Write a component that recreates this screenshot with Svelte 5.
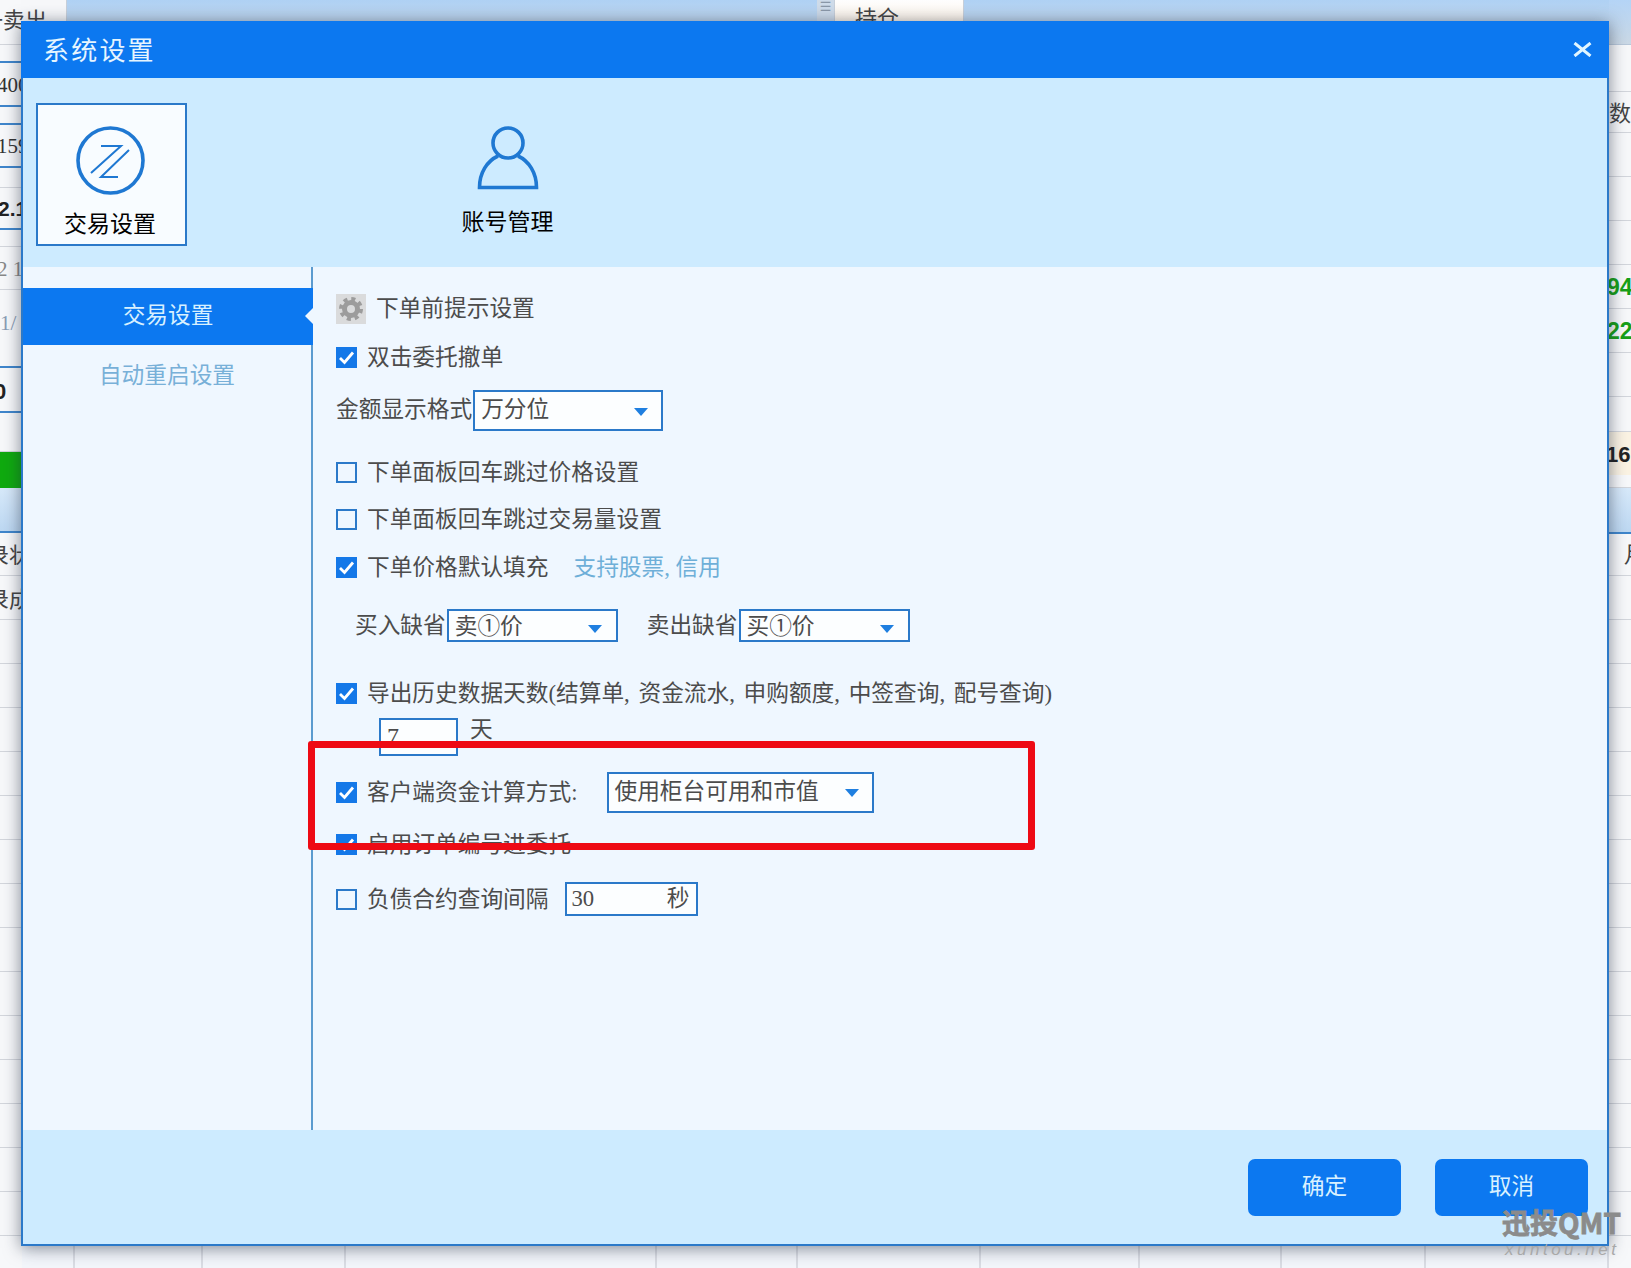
<script lang="ts">
  // backdrop rows: h = height including the bottom rule, rule colour, optional text
  type BgRow = { h: number; kind?: string; text?: string; cls?: string }

  const grid = (n: number): BgRow[] => Array.from({ length: n }, () => ({ h: 44 }))

  const leftRows: BgRow[] = [
    { h: 45, text: '一卖出', cls: 'zh top' },
    { h: 18, kind: 'blue' },
    { h: 44, kind: 'blue', text: '400', cls: 'num' },
    { h: 18, kind: 'blue' },
    { h: 43, kind: 'blue', text: '159', cls: 'num' },
    { h: 20 },
    { h: 42, kind: 'blue', text: '2.1', cls: 'bold' },
    { h: 17 },
    { h: 43, text: '2 1', cls: 'num grey' },
    { h: 78, kind: 'blue', text: '1/', cls: 'num pale' },
    { h: 45, kind: 'blue', text: '0', cls: 'bold zero' },
    { h: 39 },
    { h: 36, kind: 'green' },
    { h: 45, kind: 'band' },
    { h: 43, text: '录状', cls: 'zh tail' },
    { h: 44, text: '录成', cls: 'zh tail' },
    ...grid(15)
  ]

  const rightRows: BgRow[] = [
    { h: 45, kind: 'head' },
    { h: 47, text: '' },
    { h: 41, text: '数', cls: 'zh up' },
    { h: 44 },
    { h: 44 },
    { h: 44 },
    { h: 44, text: '94', cls: 'bold green-text' },
    { h: 44, text: '22', cls: 'bold green-text' },
    { h: 44 },
    { h: 35 },
    { h: 43, kind: 'cream', text: '16', cls: 'bold sixteen' },
    { h: 13 },
    { h: 46, kind: 'band' },
    { h: 42, text: '月', cls: 'zh moon' },
    ...grid(16)
  ]

  const bottomCols = [53, 128, 143, 311, 141, 183, 159, 142, 144, 183]
</script>

<div class="screen">
  <div class="backdrop">
    <div class="strip left">
      {#each leftRows as row}
        <div class="bg-row {row.kind ?? ''}" style="height: {row.h}px">
          {#if row.text}<span class={row.cls}>{row.text}</span>{/if}
        </div>
      {/each}
    </div>

    <div class="middle">
      <div class="tabbar">
        <div class="first-cell"></div>
        <div class="tab-band lead"></div>
        <div class="handle">☰</div>
        <div class="pos-tab">持仓</div>
        <div class="tab-band"></div>
      </div>
      <div class="bottom-cols">
        {#each bottomCols as w}
          <div class="col" style="width: {w}px"></div>
        {/each}
      </div>
    </div>

    <div class="strip right">
      {#each rightRows as row}
        <div class="bg-row {row.kind ?? ''}" style="height: {row.h}px">
          {#if row.text}<span class={row.cls}>{row.text}</span>{/if}
        </div>
      {/each}
    </div>
  </div>

  <div class="dialog">
    <header class="title-bar">
      <span class="title">系统设置</span>
      <button class="close" aria-label="关闭">
        <svg width="19" height="15" viewBox="0 0 19 15"><path d="M1.5 1 17.5 14M17.5 1 1.5 14" fill="none" stroke="#e2f6ff" stroke-width="3" /></svg>
      </button>
    </header>

    <div class="tabs">
      <div class="big-tab active">
        <svg class="ico-trade" width="69" height="69" viewBox="0 0 69 69" fill="none" stroke="#1f78d2">
          <circle cx="34.5" cy="34.5" r="32.5" stroke-width="3.6" />
          <path d="M25 20H45L15 47M53 24 25 51H42" stroke-width="2" />
        </svg>
        <span>交易设置</span>
      </div>
      <div class="big-tab">
        <svg class="ico-user" width="62" height="64" viewBox="0 0 62 64" fill="none" stroke="#1f78d2" stroke-width="3.6">
          <circle cx="31" cy="17" r="15" />
          <path d="M21 30C10 35 2.500 47 2.500 61.500H59.500C59.500 47 52 35 41 30" />
        </svg>
        <span>账号管理</span>
      </div>
    </div>

    <div class="main">
      <nav class="side">
        <div class="side-item current">交易设置</div>
        <div class="side-item">自动重启设置</div>
      </nav>

      <section class="form">
        <div class="row section-head">
          <span class="gear">
            <svg width="26" height="26" viewBox="0 0 26 26" fill="none" stroke="#9c9c9c">
              <circle cx="13" cy="13" r="6.500" stroke-width="5" />
              <circle cx="13" cy="13" r="10" stroke-width="4" stroke-dasharray="4 3.850" />
            </svg>
          </span>
          <span>下单前提示设置</span>
        </div>

        <div class="row mt23 h21"><span class="chk on">{@render tick()}</span><span>双击委托撤单</span></div>

        <div class="row mt22 h41">
          <span class="label">金额显示格式</span>
          <div class="select amount"><span>万分位</span>{@render caret()}</div>
        </div>

        <div class="row mt31 h21"><span class="chk"></span><span>下单面板回车跳过价格设置</span></div>
        <div class="row mt26 h21"><span class="chk"></span><span>下单面板回车跳过交易量设置</span></div>
        <div class="row mt27 h21">
          <span class="chk on">{@render tick()}</span><span>下单价格默认填充</span>
          <span class="hint">支持股票, 信用</span>
        </div>

        <div class="row mt31 h33 defaults">
          <span class="label">买入缺省</span>
          <div class="select price"><span>卖①价</span>{@render caret()}</div>
          <span class="label second">卖出缺省</span>
          <div class="select price"><span>买①价</span>{@render caret()}</div>
        </div>

        <div class="row mt41 h21">
          <span class="chk on">{@render tick()}</span>
          <span class="long">导出历史数据天数(结算单, 资金流水, 申购额度, 中签查询, 配号查询)</span>
        </div>

        <div class="row mt14 h38 days">
          <div class="field day-box"><span>7</span></div>
          <span class="unit">天</span>
        </div>

        <div class="row mt16 h41">
          <span class="chk on">{@render tick()}</span><span>客户端资金计算方式:</span>
          <div class="select calc"><span>使用柜台可用和市值</span>{@render caret()}</div>
        </div>

        <div class="row mt21 h21"><span class="chk on">{@render tick()}</span><span>启用订单编号进委托</span></div>

        <div class="row mt27 h34">
          <span class="chk"></span><span>负债合约查询间隔</span>
          <div class="field interval"><span>30</span><span>秒</span></div>
        </div>
      </section>
    </div>

    <footer class="actions">
      <button class="btn">确定</button>
      <button class="btn">取消</button>
    </footer>
  </div>

  <div class="red-mark"></div>

  <div class="watermark">
    <div class="wm-main">迅投QMT</div>
    <div class="wm-sub">xuntou.net</div>
  </div>
</div>

{#snippet tick()}
  <svg width="21" height="21" viewBox="0 0 21 21"><path d="M4 11 8.500 15.500 17 5.500" fill="none" stroke="#fff" stroke-width="2.800" /></svg>
{/snippet}

{#snippet caret()}
  <svg class="caret" width="14" height="8" viewBox="0 0 14 8"><path d="M0 0H14L7 8Z" fill="#1f7fe0" /></svg>
{/snippet}

<style>
  :global(body) {
    margin: 0;
    background: #f4f7fb;
  }

  .screen {
    position: relative;
    width: 1631px;
    height: 1268px;
    overflow: hidden;
    font-family: "Liberation Serif", "Noto Sans CJK SC", serif;
    font-size: 22.7px;
    line-height: 1;
    color: #4c4c4c;
  }

  /* the trading window behind the dialog */
  .backdrop {
    display: flex;
    height: 100%;
    background: #f4f7fb;
  }

  .strip {
    flex: none;
    overflow: visible;
    position: relative;
    z-index: 1;
  }

  .strip.left {
    width: 22px;
  }

  .strip.right {
    width: 23px;
    overflow: hidden;
  }

  .bg-row {
    box-sizing: border-box;
    display: flex;
    align-items: center;
    white-space: nowrap;
    border-bottom: 1px solid #d3d6dc;
    background: #f7f8fa;
  }

  .bg-row.blue {
    border-bottom: 2px solid #3f86cc;
  }

  .bg-row.green {
    background: #0faa0f;
    border-bottom: none;
  }

  .bg-row.band {
    background: linear-gradient(#d7e9fa, #bdd8f2);
    border-bottom: 2px solid #3f86cc;
  }

  .bg-row.cream {
    background: #fbf3e3;
    border-bottom: none;
  }

  .bg-row.head {
    background: linear-gradient(#b4d4f6, #cbd9e6);
    border-bottom: 1px solid #b8c8da;
  }

  .num {
    font-size: 21px;
    margin-left: -3px;
    margin-top: 2px;
    color: #333;
  }

  .num.grey {
    color: #888;
  }

  .num.pale {
    color: #8a9cb4;
    margin-left: 0;
    margin-top: -10px;
  }

  .bold {
    font-family: "Liberation Sans", sans-serif;
    font-weight: 700;
    font-size: 21px;
    color: #222;
    margin-left: -2px;
  }

  .bold.zero {
    margin-left: -6px;
    margin-top: 4px;
    font-size: 22px;
  }

  .green-text {
    color: #17a017;
    margin-left: -2px;
    margin-top: 2px;
    font-size: 23px;
  }

  .sixteen {
    margin-left: -3px;
    margin-top: 2px;
    font-size: 22px;
  }

  .zh {
    font-size: 22px;
    color: #444;
  }

  .zh.top {
    margin-left: -19px;
    margin-top: -2px;
  }

  .zh.tail {
    margin-left: -13px;
    margin-top: 4px;
  }

  .zh.up {
    margin-top: 3px;
    margin-left: 0;
  }

  .zh.moon {
    margin-left: 15px;
  }

  .middle {
    flex: 1;
    display: flex;
    flex-direction: column;
    justify-content: space-between;
  }

  .tabbar {
    display: flex;
    height: 32px;
  }

  .first-cell {
    flex: none;
    width: 44px;
    background: #f7f8fa;
    border-right: 1px solid #c8d0da;
  }

  .tab-band {
    flex: 1;
    background: linear-gradient(#b0d2f5, #c6d8ea);
  }

  .tab-band.lead {
    flex: none;
    width: 750px;
  }

  .handle {
    flex: none;
    width: 17px;
    background: #cfdcea;
    color: #8a98a8;
    font: 13px/1 "DejaVu Sans", sans-serif;
    text-align: center;
  }

  .pos-tab {
    flex: none;
    box-sizing: border-box;
    width: 130px;
    padding: 8px 0 0 20px;
    background: linear-gradient(#fff, #fbeedd);
    border: 1px solid #c8d0da;
    border-top: none;
    font-size: 22px;
    color: #444;
  }

  .bottom-cols {
    display: flex;
    height: 40px;
    background: #f3f6fb;
  }

  .col {
    box-sizing: border-box;
    border-right: 2px solid #dadde4;
  }

  /* dialog, sits over the window */
  .dialog {
    position: absolute;
    left: 21px;
    top: 21px;
    z-index: 2;
    box-sizing: border-box;
    width: 1588px;
    height: 1225px;
    display: flex;
    flex-direction: column;
    background: #eff7ff;
    border: solid #2b79c9;
    border-width: 0 2px 2px;
    box-shadow: 0 2px 16px rgba(30, 40, 60, 0.55);
  }

  .title-bar {
    flex: none;
    margin: 0 -2px;
    height: 57px;
    display: flex;
    align-items: center;
    justify-content: space-between;
    padding: 0 17px 0 22px;
    background: #0c78f0;
  }

  .title {
    font-size: 26px;
    letter-spacing: 2.200px;
    color: #e6f5ff;
    margin-top: 5px;
  }

  .close {
    padding: 0;
    border: none;
    background: none;
    display: flex;
    margin-top: 0;
  }

  .tabs {
    flex: none;
    box-sizing: border-box;
    height: 189px;
    display: flex;
    gap: 245px;
    padding: 25px 0 0 13px;
    background: #cdebff;
  }

  .big-tab {
    box-sizing: border-box;
    width: 151px;
    height: 143px;
    display: flex;
    flex-direction: column;
    align-items: center;
    font-size: 23px;
    color: #000;
  }

  .big-tab.active {
    border: 2px solid #2b79c9;
    background: #f8fcff;
  }

  .big-tab svg {
    flex: none;
  }

  .ico-trade {
    margin: 21px 3px 18px 0;
  }

  .ico-user {
    margin-top: 23px;
    margin-bottom: 21px;
  }

  .big-tab.active span {
    margin-left: -3px;
  }

  .main {
    flex: 1;
    display: flex;
    min-height: 0;
  }

  .side {
    flex: none;
    box-sizing: border-box;
    width: 290px;
    padding-top: 21px;
    border-right: 2px solid #5b9bcf;
  }

  .side-item {
    height: 62px;
    display: flex;
    align-items: center;
    justify-content: center;
    color: #78b0d8;
  }

  .side-item.current {
    position: relative;
    height: 57px;
    margin-right: -2px;
    background: #0c78f0;
    color: #d8f0ff;
  }

  .side-item.current::after {
    content: "";
    position: absolute;
    right: 0;
    top: 20px;
    border: 8px solid transparent;
    border-left-width: 0;
    border-right-color: #eff7ff;
    border-right-width: 8px;
  }

  .form {
    flex: 1;
    padding: 27px 0 0 23px;
  }

  .row {
    display: flex;
    align-items: center;
    white-space: nowrap;
  }

  .section-head {
    height: 30px;
    gap: 10px;
  }

  .gear {
    width: 30px;
    height: 30px;
    display: flex;
    align-items: center;
    justify-content: center;
    background: #dadbdc;
  }

  .mt14 { margin-top: 14px; }
  .mt16 { margin-top: 16px; }
  .mt21 { margin-top: 21px; }
  .mt22 { margin-top: 22px; }
  .mt23 { margin-top: 23px; }
  .mt26 { margin-top: 26px; }
  .mt27 { margin-top: 27px; }
  .mt31 { margin-top: 31px; }
  .mt41 { margin-top: 41px; }

  .h21 { height: 21px; }
  .h33 { height: 33px; }
  .h34 { height: 34px; }
  .h38 { height: 38px; }
  .h41 { height: 41px; }

  .chk {
    flex: none;
    box-sizing: border-box;
    width: 21px;
    height: 21px;
    margin-right: 10px;
    border: 2px solid #2b79c9;
  }

  .chk.on {
    border: none;
    background: #1478e8;
  }

  .chk svg {
    display: block;
  }

  .chk + span {
    padding-top: 2px;
  }

  .hint {
    margin-left: 25px;
    padding-top: 2px;
    color: #6eafd8;
  }

  .long {
    word-spacing: 3px;
  }

  .select,
  .field {
    box-sizing: border-box;
    display: flex;
    align-items: center;
    justify-content: space-between;
    height: 100%;
    border: 2px solid #2b79c9;
    background: #fcfeff;
  }

  .select {
    padding: 0 13px 0 6px;
  }

  .caret {
    flex: none;
    margin-top: 2px;
  }

  .amount {
    width: 190px;
    margin-left: 1px;
  }

  .defaults {
    padding-left: 19px;
  }

  .defaults .label {
    padding-top: 2px;
  }

  .price {
    width: 171px;
    margin-left: 1px;
    padding-right: 14px;
  }

  .price span {
    padding-top: 3px;
  }

  .price .caret {
    margin-top: 6px;
  }

  .second {
    margin-left: 29px;
  }

  .calc {
    width: 267px;
    margin-left: 29px;
    padding-right: 13px;
  }

  .calc .caret {
    margin-top: 0;
  }

  .days {
    padding-left: 43px;
  }

  .day-box {
    width: 79px;
    padding: 0 0 2px 6px;
    font-size: 24px;
  }

  .unit {
    margin: -14px 0 0 12px;
  }

  .interval {
    width: 133px;
    margin-left: 16px;
    padding: 0 6px 0 5px;
  }

  .actions {
    flex: none;
    height: 114px;
    box-sizing: border-box;
    display: flex;
    justify-content: flex-end;
    gap: 34px;
    padding: 29px 19px 0 0;
    background: #cdebff;
  }

  .btn {
    width: 153px;
    height: 57px;
    padding: 0;
    border: none;
    border-radius: 7px;
    background: #0c78f0;
    color: #d9f1ff;
    font: inherit;
  }

  .red-mark {
    position: absolute;
    z-index: 3;
    left: 308px;
    top: 741px;
    box-sizing: border-box;
    width: 727px;
    height: 109px;
    border: 7px solid #ee0a14;
    border-radius: 3px;
  }

  .watermark {
    position: absolute;
    z-index: 4;
    right: 10px;
    top: 1208px;
    width: 119px;
    color: #8b8b8b;
  }

  .wm-main {
    font: 700 28px/1 "Noto Sans CJK SC", sans-serif;
    -webkit-text-stroke: 0.8px #8b8b8b;
    white-space: nowrap;
  }

  .wm-sub {
    margin: 5px 0 0 3px;
    font: italic 17px/1 "Liberation Sans", sans-serif;
    letter-spacing: 3.500px;
    color: #a8a8a8;
    white-space: nowrap;
  }
</style>
